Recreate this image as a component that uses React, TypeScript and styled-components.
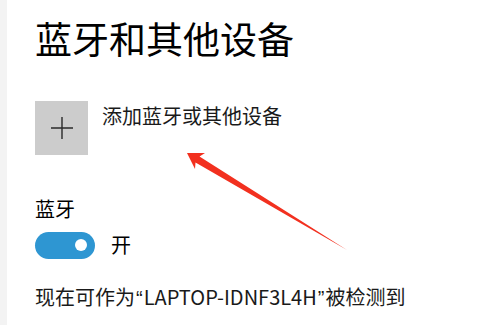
import styled, { createGlobalStyle } from "styled-components";

const Global = createGlobalStyle`
  html, body {
    margin: 0;
    padding: 0;
    background: #ffffff;
  }
  body {
    font-family: "Noto Sans CJK SC", "Noto Sans", sans-serif;
    color: #000000;
  }
`;

const Page = styled.div`
  position: relative;
  width: 479px;
  height: 325px;
  overflow: hidden;
  display: flex;
`;

const Edge = styled.div`
  width: 7px;
  flex: none;
  background: #f3f3f3;
`;

const Content = styled.div`
  flex: 1;
  padding: 14px 0 0 28px;
  display: flex;
  flex-direction: column;
`;

const Title = styled.h1`
  margin: 0;
  font-size: 37px;
  font-weight: 400;
  line-height: 48px;
  letter-spacing: 0;
`;

const AddRow = styled.div`
  margin-top: 39px;
  display: flex;
  align-items: flex-start;
  gap: 14px;
`;

const AddTile = styled.div`
  width: 53px;
  height: 54px;
  background: #cccccc;
  display: flex;
  align-items: center;
  justify-content: center;
`;

const AddLabel = styled.span`
  font-size: 20px;
  line-height: 28px;
  margin-top: 1px;
  color: #1a1a1a;
`;

const Section = styled.div`
  margin-top: 40px;
  font-size: 20px;
  line-height: 28px;
`;

const ToggleRow = styled.div`
  margin-top: 8px;
  display: flex;
  align-items: center;
  gap: 16px;
`;

const Track = styled.div<{ $on: boolean }>`
  width: 60px;
  height: 27px;
  border-radius: 14px;
  background: ${(p) => (p.$on ? "#2e96d2" : "#ffffff")};
  position: relative;
`;

const Knob = styled.div<{ $on: boolean }>`
  position: absolute;
  top: 7.5px;
  left: ${(p) => (p.$on ? "40px" : "8px")};
  width: 12px;
  height: 12px;
  border-radius: 50%;
  background: #ffffff;
`;

const ToggleText = styled.span`
  font-size: 20px;
  line-height: 28px;
`;

const Note = styled.p`
  margin: 24px 0 0;
  font-size: 20px;
  line-height: 28px;
  color: #1a1a1a;
  white-space: nowrap;
`;

const Quote = styled.span`
  font-family: "Liberation Sans", sans-serif;
  margin: 0 1px;
`;

const Annotation = styled.svg`
  position: absolute;
  left: 0;
  top: 0;
  pointer-events: none;
`;

export default function App() {
  return (
    <>
      <Global />
      <Page>
        <Edge />
        <Content>
          <Title>蓝牙和其他设备</Title>
          <AddRow>
            <AddTile>
              <svg width="22" height="22" viewBox="0 0 22 22">
                <path d="M0 11H22M11 0V22" stroke="#2a2a2a" strokeWidth="1.4" />
              </svg>
            </AddTile>
            <AddLabel>添加蓝牙或其他设备</AddLabel>
          </AddRow>
          <Section>蓝牙</Section>
          <ToggleRow>
            <Track $on>
              <Knob $on />
            </Track>
            <ToggleText>开</ToggleText>
          </ToggleRow>
          <Note>
            现在可作为<Quote>“</Quote>LAPTOP-IDNF3L4H<Quote>”</Quote>被检测到
          </Note>
        </Content>
        <Annotation width="479" height="325" viewBox="0 0 479 325">
          <polygon
            points="187,153 205,153 199.5,156.5 347,250 195.5,162.5 195,169"
            fill="#f2301f"
          />
        </Annotation>
      </Page>
    </>
  );
}
